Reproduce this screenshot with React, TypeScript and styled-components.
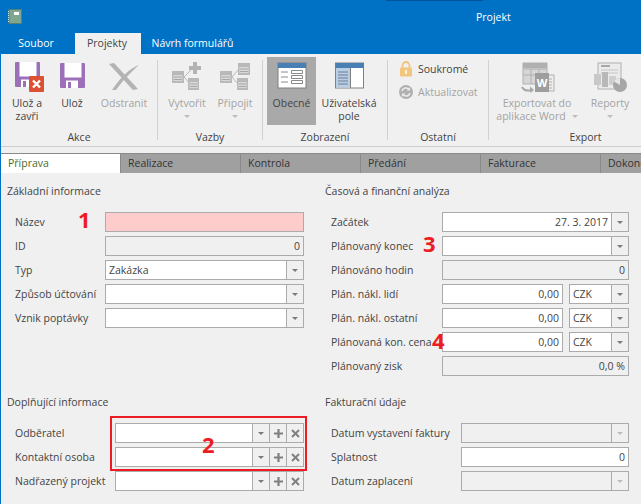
import React from 'react';
import styled, { createGlobalStyle } from 'styled-components';

const GlobalStyle = createGlobalStyle`
    html, body {
        margin: 0;
        padding: 0;
        background: #f0f0f0;
    }
`;

const Window = styled.div`
    position: relative;
    width: 641px;
    height: 504px;
    overflow: hidden;
    box-sizing: border-box;
    border-left: 1px solid #0072c6;
    background: #f0f0f0;
    color: #444;
    font-family: "Open Sans", "Liberation Sans", sans-serif;
    font-size: 10.5px;
    line-height: 14px;
`;

const TitleBar = styled.div`
    position: relative;
    display: flex;
    align-items: center;
    height: 33px;
    padding-left: 7px;
    background: #0072c6;
    color: white;
    &::before {
        content: "";
        position: absolute;
        top: 0;
        left: 385px;
        width: 97px;
        height: 1px;
        background: #00569a;
    }
`;

const TitleText = styled.span`
    margin-left: 454px;
`;

const TabRow = styled.div`
    display: flex;
    height: 21px;
    background: #0072c6;
`;

const MenuTab = styled.div<{ $active?: boolean; $width: number; $nudge: number }>`
    width: ${(p) => p.$width}px;
    box-sizing: border-box;
    padding: 3px ${(p) => p.$nudge}px 0 0;
    text-align: center;
    color: ${(p) => (p.$active ? '#444' : 'white')};
    background: ${(p) => (p.$active ? '#f0f0f0' : 'transparent')};
`;

const Ribbon = styled.div`
    display: flex;
    height: 89px;
    padding-top: 3px;
    border-bottom: 1px solid #cfcfcf;
`;

const RibbonGroup = styled.div<{ $width: number }>`
    display: flex;
    flex-direction: column;
    width: ${(p) => p.$width}px;
    height: 87px;
`;

const GroupItems = styled.div<{ $gap?: number; $pad: number }>`
    display: flex;
    gap: ${(p) => p.$gap ?? 0}px;
    height: 68px;
    padding-left: ${(p) => p.$pad}px;
`;

const GroupLabel = styled.div<{ $pad?: number }>`
    margin-top: auto;
    padding-left: ${(p) => p.$pad ?? 0}px;
    text-align: center;
    color: #444;
`;

const Separator = styled.div`
    width: 1px;
    margin: 3px 0 6px;
    background: #d0d0d0;
`;

const BigButton = styled.div<{ $width: number; $disabled?: boolean; $active?: boolean }>`
    display: flex;
    flex-direction: column;
    align-items: center;
    width: ${(p) => p.$width}px;
    height: 68px;
    box-sizing: border-box;
    padding-top: 5px;
    text-align: center;
    white-space: nowrap;
    line-height: 13px;
    color: ${(p) => (p.$disabled ? '#a3a3a3' : '#444')};
    background: ${(p) => (p.$active ? '#a9a9a9' : 'transparent')};
`;

const BigIcon = styled.svg`
    display: block;
    width: 38px;
    height: 32px;
    margin-bottom: 3px;
    flex-shrink: 0;
`;

const SmallColumn = styled.div`
    display: flex;
    flex-direction: column;
    gap: 7px;
    padding-top: 4px;
`;

const SmallButton = styled.div<{ $disabled?: boolean }>`
    display: flex;
    align-items: center;
    gap: 5px;
    height: 16px;
    color: ${(p) => (p.$disabled ? '#a3a3a3' : '#444')};
`;

const SmallIcon = styled.svg`
    display: block;
    width: 14px;
    height: 16px;
`;

const Caret = styled.span<{ $light?: boolean }>`
    display: inline-block;
    width: 0;
    height: 0;
    border-left: 3px solid transparent;
    border-right: 3px solid transparent;
    border-top: 3px solid ${(p) => (p.$light ? '#bdbdbd' : '#7a7a7a')};
`;

const CaretLine = styled.div`
    display: flex;
    justify-content: center;
    padding-top: 5px;
`;

const InlineCaret = styled(Caret)`
    margin-left: 6px;
    vertical-align: 2px;
`;

const PageTabs = styled.div`
    display: flex;
    height: 20px;
    margin-top: 6px;
    box-sizing: border-box;
    background: #a0a0a0;
    border-top: 1px solid #8a8a8a;
    white-space: nowrap;
`;

const PageTab = styled.div<{ $active?: boolean }>`
    flex: 0 0 120px;
    box-sizing: border-box;
    padding: 2px 0 0 7px;
    border-right: 1px solid #8a8a8a;
    color: ${(p) => (p.$active ? '#4c6a2a' : '#333')};
    background: ${(p) => (p.$active ? 'white' : 'transparent')};
`;

const FormGrid = styled.div`
    display: grid;
    grid-template-columns: 317px 323px;
    row-gap: 18px;
    padding-top: 10px;
`;

const Section = styled.section`
    display: flex;
    flex-direction: column;
    gap: 4px;
`;

const Heading = styled.div<{ $left: number }>`
    height: 16px;
    margin-bottom: 9px;
    padding-left: ${(p) => p.$left}px;
    line-height: 16px;
`;

const FieldRow = styled.div<{ $left: number; $label: number; $end: number }>`
    display: grid;
    grid-template-columns: ${(p) => p.$label}px ${(p) => p.$end}px;
    align-items: center;
    height: 20px;
    padding-left: ${(p) => p.$left}px;
    white-space: nowrap;
`;

const Controls = styled.div`
    display: flex;
    gap: 6px;
    height: 20px;
`;

const Field = styled.div<{ $tone?: 'plain' | 'read' | 'error'; $width?: number }>`
    display: flex;
    flex: ${(p) => (p.$width ? `0 0 ${p.$width}px` : '1')};
    box-sizing: border-box;
    height: 20px;
    border: 1px solid #ababab;
    background: ${(p) =>
        p.$tone === 'error' ? '#ffcccc' : p.$tone === 'read' ? '#f0f0f0' : 'white'};
`;

const FieldText = styled.div<{ $right?: boolean }>`
    flex: 1;
    padding: 2px 3px;
    text-align: ${(p) => (p.$right ? 'right' : 'left')};
    color: #444;
`;

const FieldButton = styled.div`
    display: flex;
    flex: 0 0 16px;
    align-items: center;
    justify-content: center;
    border-left: 1px solid #ababab;
    background: #f0f0f0;
    color: #7a7a7a;
`;

const ActionIcon = styled.svg`
    display: block;
    width: 9px;
    height: 9px;
`;

const RedFrame = styled.div`
    position: absolute;
    left: 109px;
    top: 416px;
    width: 197px;
    height: 55px;
    box-sizing: border-box;
    border: 2px solid #ed1c24;
`;

const Marker = styled.div<{ $x: number; $y: number }>`
    position: absolute;
    left: ${(p) => p.$x}px;
    top: ${(p) => p.$y}px;
    font-size: 22px;
    line-height: 22px;
    font-weight: 700;
    color: #ed1c24;
`;

const AppIcon = () => (
    <svg width="14" height="15" viewBox="0 0 14 15">
        <rect x="1" y="0.5" width="12.5" height="14" fill="#7fa68f" stroke="#5c7f72" />
        <rect x="6" y="3" width="5" height="3" fill="white" />
        <path d="M0.5 2v11" stroke="#d8e6de" strokeDasharray="1 1" />
    </svg>
);

const FloppyShape = () => (
    <>
        <rect x="0" y="0" width="25" height="25" rx="1" fill="#9c6fb9" />
        <rect x="4.5" y="0" width="17" height="14.5" fill="white" />
        <rect x="6" y="17.5" width="12" height="7.5" fill="white" />
        <rect x="8" y="19" width="3" height="6" fill="#9c6fb9" />
    </>
);

const SaveCloseIcon = () => (
    <BigIcon viewBox="0 0 38 32">
        <g transform="translate(7 0)">
            <FloppyShape />
        </g>
        <rect x="21" y="14" width="15" height="16" rx="1" fill="#dc5034" />
        <path d="M25 18.5l7 7M32 18.5l-7 7" stroke="white" strokeWidth="2.4" />
    </BigIcon>
);

const SaveIcon = () => (
    <BigIcon viewBox="0 0 38 32">
        <g transform="translate(7 1)">
            <FloppyShape />
        </g>
    </BigIcon>
);

const DeleteIcon = () => (
    <BigIcon viewBox="0 0 38 32">
        <path d="M4 2 L9 1 L33 27 L28 28 Z" fill="#b3b3b3" />
        <path d="M34 3 C26 6 18 12 7 28 L11 28 C19 17 27 9 34 3 Z" fill="#b3b3b3" />
    </BigIcon>
);

const MiniTable = ({ x, y, w = 12, h = 12 }: { x: number; y: number; w?: number; h?: number }) => (
    <>
        <rect x={x} y={y} width={w} height={h} fill="#b9b9b9" />
        <rect x={x + 1.5} y={y + 4} width={w - 3} height={h - 6} fill="#d8d8d8" />
        <path
            d={`M${x + 2} ${y + 6}h${w - 4}M${x + 2} ${y + 8.5}h${w - 4}`}
            stroke="#a8a8a8"
            strokeWidth="1"
        />
    </>
);

const CreateLinkIcon = () => (
    <BigIcon viewBox="0 0 38 32">
        <MiniTable x={4} y={9} />
        <MiniTable x={20} y={16} w={11} />
        <path d="M16 15L24 7M16 15L21 21" stroke="#b9b9b9" fill="none" />
        <path d="M21 4h12v4h-12zM25 0h4v12h-4z" fill="#b3b3b3" />
    </BigIcon>
);

const AttachLinkIcon = () => (
    <BigIcon viewBox="0 0 38 32">
        <MiniTable x={4} y={9} />
        <MiniTable x={21} y={16} w={11} />
        <MiniTable x={22} y={1} />
        <path d="M16 15L22 8M16 15L21 21" stroke="#b9b9b9" fill="none" />
    </BigIcon>
);

const GeneralViewIcon = () => (
    <BigIcon viewBox="0 0 38 32">
        <rect x="5" y="1" width="28" height="25" fill="white" stroke="#808080" />
        <rect x="5" y="1" width="28" height="5" fill="#4a7fb5" />
        <path d="M8 10h7M8 15h7M8 20h7" stroke="#8a8a8a" />
        <path d="M18.5 8.5h11v3h-11zM18.5 13.5h11v3h-11zM18.5 18.5h11v3h-11z" fill="none" stroke="#8a8a8a" />
    </BigIcon>
);

const CustomViewIcon = () => (
    <BigIcon viewBox="0 0 38 32">
        <rect x="5.5" y="1" width="28" height="25" fill="white" stroke="#808080" />
        <rect x="6" y="6" width="14" height="19.5" fill="#b9cde5" />
        <rect x="5.5" y="1" width="28" height="5" fill="#4a7fb5" />
        <path d="M20.5 6v20" stroke="#808080" />
        <path d="M8 10h10M8 13h10M8 16h10M8 19h10M8 22h10" stroke="#6f7f90" />
    </BigIcon>
);

const WordIcon = () => (
    <BigIcon viewBox="0 0 38 32">
        <rect x="5" y="1" width="24" height="21" fill="#d6d6d6" stroke="#b0b0b0" />
        <path d="M5 7h24M5 13h24M13 7v15M21 7v15" stroke="#b0b0b0" />
        <rect x="5" y="1" width="24" height="5" fill="#b0b0b0" />
        <rect x="22" y="13" width="14" height="16" fill="#eeeeee" stroke="#b0b0b0" />
        <path d="M29 17h5M29 20h5M29 23h5M29 26h5" stroke="#b0b0b0" />
        <rect x="17" y="11" width="14" height="19" fill="#9e9e9e" />
        <text x="24" y="24.5" textAnchor="middle" fontSize="11" fontWeight="700" fill="white" fontFamily="Open Sans, sans-serif">W</text>
        <path d="M4 25c2 4 7 4 11 3" fill="none" stroke="#a8a8a8" strokeWidth="2" />
        <path d="M12 24.5l4 3.5-4 3z" fill="#a8a8a8" />
    </BigIcon>
);

const ReportIcon = () => (
    <BigIcon viewBox="0 0 38 32">
        <rect x="7" y="1" width="23" height="26" fill="#ebebeb" stroke="#b0b0b0" />
        <path d="M10 4h9" stroke="#a8a8a8" strokeWidth="2" />
        <path d="M10 8h17M10 11h17" stroke="#c4c4c4" />
        <rect x="3" y="12" width="7" height="11" fill="#c8c8c8" />
        <rect x="11" y="10" width="6" height="15" fill="#b8b8b8" />
        <rect x="18" y="14" width="7" height="9" fill="#cfcfcf" />
        <circle cx="29" cy="23" r="7" fill="#a6a6a6" />
        <path d="M29 23v-7a7 7 0 0 0-6 3.5z" fill="#e6e6e6" />
    </BigIcon>
);

const LockIcon = () => (
    <SmallIcon viewBox="0 0 14 16">
        <path d="M3.5 7V4.5a3.5 3.5 0 0 1 7 0V7" fill="none" stroke="#f0c27b" strokeWidth="1.8" />
        <rect x="1" y="6.5" width="12" height="9" rx="1" fill="#f3c680" />
        <rect x="6" y="9" width="2" height="4" fill="#fff4de" />
    </SmallIcon>
);

const RefreshIcon = () => (
    <SmallIcon viewBox="0 0 14 16">
        <circle cx="7" cy="8" r="7" fill="#b0b0b0" />
        <path d="M3 7a4 4 0 0 1 7-1.5M11 9a4 4 0 0 1-7 1.5" fill="none" stroke="#ececec" strokeWidth="1.5" />
        <path d="M11 3v3.5H7.5zM3 13V9.5h3.5z" fill="#ececec" />
    </SmallIcon>
);

const PlusIcon = () => (
    <ActionIcon viewBox="0 0 9 9">
        <path d="M3.4 0h2.2v3.4H9v2.2H5.6V9H3.4V5.6H0V3.4h3.4z" fill="#808080" />
    </ActionIcon>
);

const CrossIcon = () => (
    <ActionIcon viewBox="0 0 9 9">
        <path d="M1 1l7 7M8 1L1 8" stroke="#808080" strokeWidth="2" />
    </ActionIcon>
);

const DropButton = ({ light }: { light?: boolean }) => (
    <FieldButton>
        <Caret $light={light} />
    </FieldButton>
);

const Combo = ({ text, right, width }: { text?: string; right?: boolean; width?: number }) => (
    <Field $width={width}>
        <FieldText $right={right}>{text}</FieldText>
        <DropButton />
    </Field>
);

const LookupField = () => (
    <Field>
        <FieldText />
        <DropButton />
        <FieldButton>
            <PlusIcon />
        </FieldButton>
        <FieldButton>
            <CrossIcon />
        </FieldButton>
    </Field>
);

const ReadField = ({ text }: { text: string }) => (
    <Field $tone="read">
        <FieldText $right>{text}</FieldText>
    </Field>
);

const AmountField = () => (
    <Controls>
        <Field>
            <FieldText $right>0,00</FieldText>
        </Field>
        <Combo text="CZK" width={60} />
    </Controls>
);

const pageTabs = ['Příprava', 'Realizace', 'Kontrola', 'Předání', 'Fakturace', 'Dokončení'];

const topLeft = { $left: 14, $label: 90, $end: 199 };
const topRight = { $left: 13, $label: 111, $end: 187 };
const bottomLeft = { $left: 14, $label: 100, $end: 189 };
const bottomRight = { $left: 13, $label: 130, $end: 168 };

const App: React.FC = () => {
    return (
        <Window>
            <GlobalStyle />
            <TitleBar>
                <AppIcon />
                <TitleText>Projekt</TitleText>
            </TitleBar>
            <TabRow>
                <MenuTab $width={74} $nudge={4}>Soubor</MenuTab>
                <MenuTab $width={66} $nudge={2} $active>Projekty</MenuTab>
                <MenuTab $width={104} $nudge={1}>Návrh formulářů</MenuTab>
            </TabRow>

            <Ribbon>
                <RibbonGroup $width={156}>
                    <GroupItems $pad={7}>
                        <BigButton $width={38}>
                            <SaveCloseIcon />
                            Ulož a<br />zavři
                        </BigButton>
                        <BigButton $width={52}>
                            <SaveIcon />
                            Ulož
                        </BigButton>
                        <BigButton $width={52} $disabled>
                            <DeleteIcon />
                            Odstranit
                        </BigButton>
                    </GroupItems>
                    <GroupLabel>Akce</GroupLabel>
                </RibbonGroup>
                <Separator />
                <RibbonGroup $width={104}>
                    <GroupItems $pad={5}>
                        <BigButton $width={48} $disabled>
                            <CreateLinkIcon />
                            Vytvořit
                            <CaretLine><Caret $light /></CaretLine>
                        </BigButton>
                        <BigButton $width={48} $disabled>
                            <AttachLinkIcon />
                            Připojit
                            <CaretLine><Caret $light /></CaretLine>
                        </BigButton>
                    </GroupItems>
                    <GroupLabel>Vazby</GroupLabel>
                </RibbonGroup>
                <Separator />
                <RibbonGroup $width={124}>
                    <GroupItems $pad={4} $gap={4}>
                        <BigButton $width={49} $active>
                            <GeneralViewIcon />
                            Obecné
                        </BigButton>
                        <BigButton $width={58}>
                            <CustomViewIcon />
                            Uživatelská<br />pole
                        </BigButton>
                    </GroupItems>
                    <GroupLabel>Zobrazení</GroupLabel>
                </RibbonGroup>
                <Separator />
                <RibbonGroup $width={100}>
                    <GroupItems $pad={11}>
                        <SmallColumn>
                            <SmallButton>
                                <LockIcon />
                                Soukromé
                            </SmallButton>
                            <SmallButton $disabled>
                                <RefreshIcon />
                                Aktualizovat
                            </SmallButton>
                        </SmallColumn>
                    </GroupItems>
                    <GroupLabel>Ostatní</GroupLabel>
                </RibbonGroup>
                <Separator />
                <RibbonGroup $width={151}>
                    <GroupItems $pad={0}>
                        <BigButton $width={96} $disabled>
                            <WordIcon />
                            Exportovat do
                            <span>aplikace Word<InlineCaret $light /></span>
                        </BigButton>
                        <BigButton $width={50} $disabled>
                            <ReportIcon />
                            Reporty
                            <CaretLine><Caret $light /></CaretLine>
                        </BigButton>
                    </GroupItems>
                    <GroupLabel $pad={42}>Export</GroupLabel>
                </RibbonGroup>
            </Ribbon>

            <PageTabs>
                {pageTabs.map((tab, index) => (
                    <PageTab key={tab} $active={index === 0}>{tab}</PageTab>
                ))}
            </PageTabs>

            <FormGrid>
                <Section>
                    <Heading $left={6}>Základní informace</Heading>
                    <FieldRow {...topLeft}>
                        Název
                        <Field $tone="error" />
                    </FieldRow>
                    <FieldRow {...topLeft}>
                        ID
                        <ReadField text="0" />
                    </FieldRow>
                    <FieldRow {...topLeft}>
                        Typ
                        <Combo text="Zakázka" />
                    </FieldRow>
                    <FieldRow {...topLeft}>
                        Způsob účtování
                        <Combo />
                    </FieldRow>
                    <FieldRow {...topLeft}>
                        Vznik poptávky
                        <Combo />
                    </FieldRow>
                </Section>

                <Section>
                    <Heading $left={7}>Časová a finanční analýza</Heading>
                    <FieldRow {...topRight}>
                        Začátek
                        <Combo text="27. 3. 2017" right />
                    </FieldRow>
                    <FieldRow {...topRight}>
                        Plánovaný konec
                        <Combo />
                    </FieldRow>
                    <FieldRow {...topRight}>
                        Plánováno hodin
                        <ReadField text="0" />
                    </FieldRow>
                    <FieldRow {...topRight}>
                        Plán. nákl. lidí
                        <AmountField />
                    </FieldRow>
                    <FieldRow {...topRight}>
                        Plán. nákl. ostatní
                        <AmountField />
                    </FieldRow>
                    <FieldRow {...topRight}>
                        Plánovaná kon. cena
                        <AmountField />
                    </FieldRow>
                    <FieldRow {...topRight}>
                        Plánovaný zisk
                        <ReadField text="0,0 %" />
                    </FieldRow>
                </Section>

                <Section>
                    <Heading $left={6}>Doplňující informace</Heading>
                    <FieldRow {...bottomLeft}>
                        Odběratel
                        <LookupField />
                    </FieldRow>
                    <FieldRow {...bottomLeft}>
                        Kontaktní osoba
                        <LookupField />
                    </FieldRow>
                    <FieldRow {...bottomLeft}>
                        Nadřazený projekt
                        <LookupField />
                    </FieldRow>
                </Section>

                <Section>
                    <Heading $left={7}>Fakturační údaje</Heading>
                    <FieldRow {...bottomRight}>
                        Datum vystavení faktury
                        <Field $tone="read">
                            <FieldText />
                            <DropButton light />
                        </Field>
                    </FieldRow>
                    <FieldRow {...bottomRight}>
                        Splatnost
                        <Field>
                            <FieldText $right>0</FieldText>
                        </Field>
                    </FieldRow>
                    <FieldRow {...bottomRight}>
                        Datum zaplacení
                        <Field $tone="read">
                            <FieldText />
                            <DropButton light />
                        </Field>
                    </FieldRow>
                </Section>
            </FormGrid>

            <RedFrame />
            <Marker $x={77} $y={208}>1</Marker>
            <Marker $x={201} $y={433}>2</Marker>
            <Marker $x={422} $y={232}>3</Marker>
            <Marker $x={431} $y={329}>4</Marker>
        </Window>
    );
};

export default App;
